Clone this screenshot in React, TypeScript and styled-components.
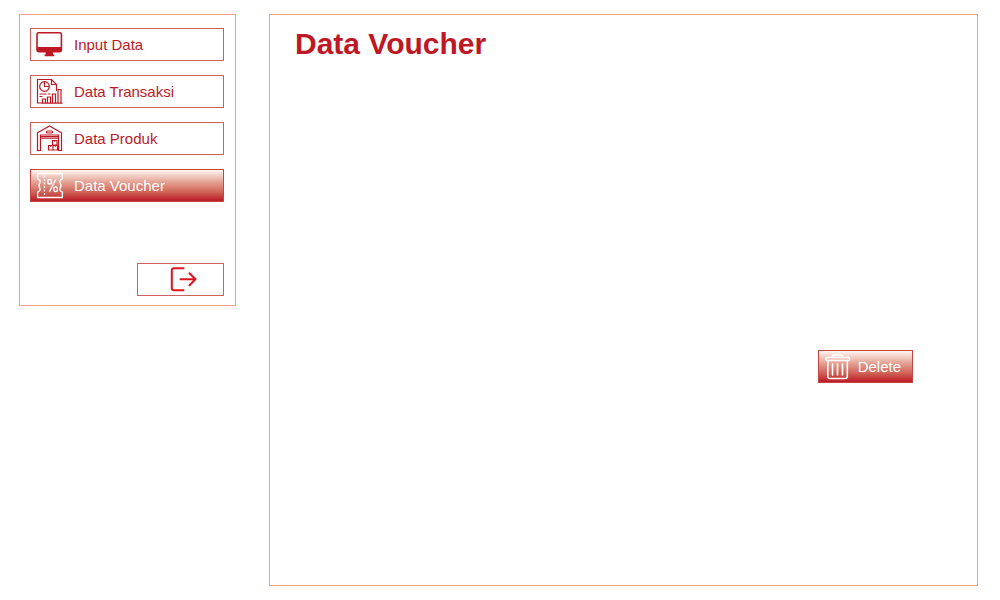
import React from "react";
import styled, { createGlobalStyle, css } from "styled-components";

const RED = "#be1825";
const SOFT = "#f0a08c";
const EDGE = "#cf5f5c";

const GlobalStyle = createGlobalStyle`
  *, *::before, *::after { box-sizing: border-box; }
  body {
    margin: 0;
    background: #fff;
    color: ${RED};
    font-family: "Liberation Sans", Arial, Helvetica, sans-serif;
  }
`;

const Page = styled.div`
  display: flex;
  align-items: flex-start;
  gap: 33px;
  min-height: 100vh;
  padding: 14px 22px 14px 19px;
`;

const Sidebar = styled.aside`
  flex: 0 0 217px;
  display: flex;
  flex-direction: column;
  gap: 61px;
  padding: 13px 11px 9px 10px;
  border: 1px solid ${SOFT};
`;

const Menu = styled.nav`
  display: flex;
  flex-direction: column;
  gap: 14px;
`;

const filled = css`
  color: #fff;
  border-color: #c74444;
  background: linear-gradient(to bottom, #fff6f0 0%, #e3a092 40%, #cf6156 72%, #bd1a25 100%);
`;

const Button = styled.button<{ $filled?: boolean }>`
  display: flex;
  align-items: center;
  height: 33px;
  padding: 0 11px 0 5px;
  border: 1px solid ${EDGE};
  background: #fff;
  color: ${RED};
  font: inherit;
  font-size: 15px;
  line-height: 20px;
  text-align: left;
  cursor: pointer;
  ${(p) => p.$filled && filled}
`;

const MenuButton = styled(Button)`
  gap: 10px;
  width: 100%;
`;

const ExitButton = styled(Button)`
  align-self: flex-end;
  justify-content: center;
  width: 87px;
  padding: 0 0 0 6px;
  color: #dc1420;
`;

const DeleteButton = styled(Button)`
  gap: 6px;
`;

const Icon = styled.svg`
  flex: none;
  display: block;
  width: 28px;
  height: 28px;
  margin-bottom: 2px;
  fill: none;
  stroke: currentColor;
`;

const Panel = styled.main`
  flex: 1;
  display: flex;
  flex-direction: column;
  min-height: calc(100vh - 28px);
  padding: 11px 64px 12px 25px;
  border: 1px solid ${SOFT};
`;

const Title = styled.h1`
  margin: 0;
  font-size: 30px;
  line-height: 36px;
  font-weight: 700;
`;

const Actions = styled.div`
  flex: 1;
  display: flex;
  align-items: center;
  justify-content: flex-end;
  padding-top: 98px;
`;

const MonitorIcon = () => (
  <Icon viewBox="0 0 28 28" aria-hidden="true">
    <rect x="1" y="2.8" width="24.4" height="18.8" rx="1.6" strokeWidth="1.6" />
    <path d="M1 17h24.400v3.200q0 1.400-1.400 1.400H2.400Q1 21.600 1 20.200z" fill="currentColor" stroke="none" />
    <path d="M10 21.500h6.600l.6 3.100h1v1.700H8.600v-1.700h.8z" fill="currentColor" stroke="none" />
  </Icon>
);

const ReportIcon = () => (
  <Icon viewBox="0 0 28 28" strokeWidth="1.200" aria-hidden="true">
    <path d="M5 26H1.500V2.500H15.500l5 5V14M15.500 2.500V7.500H20.500" />
    <circle cx="8.500" cy="9.500" r="4.800" />
    <path d="M8.500 4.700V9.500H13.300" />
    <path d="M3.500 17h7M12 17h2.500M3.500 19.500h3" />
    <path d="M5 26.200h21.500M6.500 26v-4h3v4M11.500 26v-6h3V26M16.500 26v-9h3v9M22 26V12.500h3V26" />
  </Icon>
);

const WarehouseIcon = () => (
  <Icon viewBox="0 0 28 28" strokeWidth="1.200" aria-hidden="true">
    <path d="M1.500 26.500V8.800L13.500 2 25.500 8.800v17.700h-3V11H4.500v15.500z" />
    <path d="M4.500 12.500h18M4.500 14.200h18" strokeWidth="1.200" />
    <rect x="10.500" y="7" width="6" height="2" rx="1" />
    <path d="M16.500 16.500h4.500v4.500h-4.500zM12.500 21.500h4.500v4.500h-4.500zM17 21.500h4.500v4.500h-4.500z" />
    <path d="M18.800 16.500v1.500M14.800 21.500v1.500M19.300 21.500v1.500" strokeWidth="1" />
  </Icon>
);

const VoucherIcon = () => (
  <Icon viewBox="0 0 28 28" strokeWidth="1.300" strokeLinejoin="round" aria-hidden="true">
    <path d="M1.600 2.500h24.800v5.300c-2.600.8-3 2.700-2.200 4.200.8 1.200.8 3.800 0 5-.8 1.500-.4 3.400 2.200 4.200v5.300H1.600v-5.300c2.600-.8 3-2.700 2.200-4.200-.8-1.200-.8-3.800 0-5C4.600 10.500 4.200 8.600 1.600 7.800z" />
    <path d="M8.500 4.500V25.500" strokeDasharray="2 1.500" />
    <ellipse cx="13.700" cy="10.800" rx="1.900" ry="2.400" />
    <ellipse cx="19.600" cy="18.200" rx="1.900" ry="2.400" />
    <path d="M20 8L13.300 21" />
  </Icon>
);

const ExitIcon = () => (
  <Icon viewBox="0 0 28 28" strokeWidth="2" strokeLinecap="round" strokeLinejoin="round" aria-hidden="true">
    <path d="M13.500 3.200H4Q1.800 3.200 1.800 5.400v17.600q0 2.200 2.200 2.200h9.500" />
    <path d="M10.500 14.300h15M19.500 8.300l6 6-6 6" />
  </Icon>
);

const TrashIcon = () => (
  <Icon viewBox="0 0 28 28" strokeWidth="1.600" strokeLinecap="round" strokeLinejoin="round" aria-hidden="true">
    <path d="M8.500 5.500V4.200Q8.500 3 9.700 3h7.600q1.200 0 1.200 1.200V5.500" />
    <rect x="2" y="5.500" width="23.500" height="3" rx="1" />
    <path d="M3.800 8.500V24.500q0 2 2 2h15.500q2 0 2-2V8.500" />
    <path d="M8.500 12V23M13.500 12V23M18.500 12V23" />
  </Icon>
);

const items = [
  { label: "Input Data", Glyph: MonitorIcon },
  { label: "Data Transaksi", Glyph: ReportIcon },
  { label: "Data Produk", Glyph: WarehouseIcon },
  { label: "Data Voucher", Glyph: VoucherIcon, active: true },
];

export default function App() {
  return (
    <>
      <GlobalStyle />
      <Page>
        <Sidebar>
          <Menu>
            {items.map(({ label, Glyph, active }) => (
              <MenuButton key={label} type="button" $filled={active} aria-current={active ? "page" : undefined}>
                <Glyph />
                {label}
              </MenuButton>
            ))}
          </Menu>
          <ExitButton type="button" aria-label="Keluar">
            <ExitIcon />
          </ExitButton>
        </Sidebar>
        <Panel>
          <Title>Data Voucher</Title>
          <Actions>
            <DeleteButton type="button" $filled>
              <TrashIcon />
              Delete
            </DeleteButton>
          </Actions>
        </Panel>
      </Page>
    </>
  );
}
